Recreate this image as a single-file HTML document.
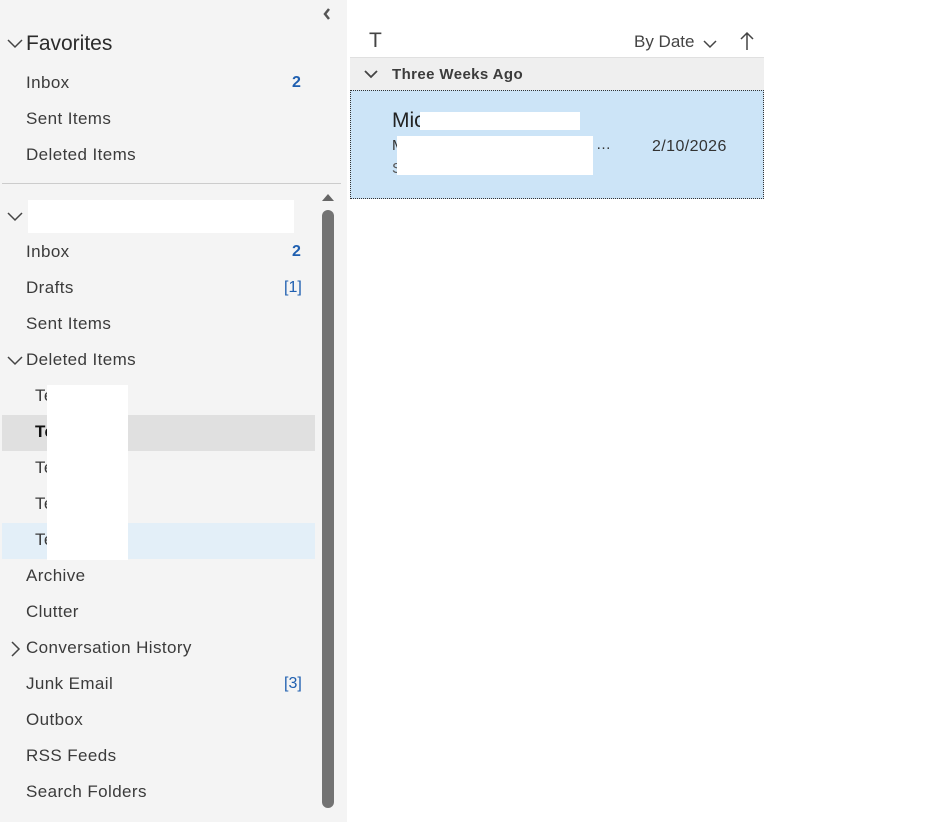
<!DOCTYPE html><html><head><style>
body{margin:0;width:940px;height:822px;background:#fff;font-family:"Liberation Sans",sans-serif;position:relative;overflow:hidden;color:#333}
.a{position:absolute;white-space:nowrap}
.side{position:absolute;left:0;top:0;width:347px;height:822px;background:#f4f4f4}
.it{position:absolute;left:26px;font-size:17px;color:#3b3b3b;letter-spacing:0.4px}
.n{position:absolute;font-size:16px;color:#1f5fb0}
.w{position:absolute;background:#fff}
</style></head><body>
<div class="side">
<svg class="a" style="left:322px;top:7px" width="10" height="14"><path d="M7 2 L3 7 L7 12" stroke="#555" stroke-width="2.5" fill="none"/></svg>
<svg class="a" style="left:7px;top:38px" width="16" height="12"><path d="M1 2 L8 9 L15 2" stroke="#444" stroke-width="1.5" fill="none"/></svg>
<div class="a" style="left:26px;top:32px;font-size:21px;color:#2b2b2b">Favorites</div>
<div class="it" style="top:73px">Inbox</div><div class="n" style="left:292px;top:74px;font-weight:bold">2</div>
<div class="it" style="top:109px">Sent Items</div>
<div class="it" style="top:145px">Deleted Items</div>
<div class="a" style="left:2px;top:183px;width:339px;height:1px;background:#ccc"></div>
<svg class="a" style="left:7px;top:211px" width="16" height="12"><path d="M1 2 L8 9 L15 2" stroke="#444" stroke-width="1.5" fill="none"/></svg>
<div class="w" style="left:28px;top:200px;width:266px;height:33px"></div>
<svg class="a" style="left:321px;top:192px" width="14" height="10"><path d="M1 9 L7 2 L13 9Z" fill="#666"/></svg>
<div class="a" style="left:322px;top:210px;width:12px;height:598px;background:#737373;border-radius:6px"></div>
<div class="it" style="top:242px">Inbox</div><div class="n" style="left:292px;top:243px;font-weight:bold">2</div>
<div class="it" style="top:278px">Drafts</div><div class="n" style="left:284px;top:279px">[1]</div>
<div class="it" style="top:314px">Sent Items</div>
<svg class="a" style="left:7px;top:355px" width="16" height="12"><path d="M1 2 L8 9 L15 2" stroke="#444" stroke-width="1.5" fill="none"/></svg>
<div class="it" style="top:350px">Deleted Items</div>
<div class="a" style="left:2px;top:415px;width:313px;height:36px;background:#e0e0e0"></div>
<div class="a" style="left:2px;top:523px;width:313px;height:36px;background:#e3eff8"></div>
<div class="it" style="left:35px;top:386px">Te</div>
<div class="it" style="left:35px;top:422px;font-weight:bold;color:#111">Te</div>
<div class="it" style="left:35px;top:458px">Te</div>
<div class="it" style="left:35px;top:494px">Te</div>
<div class="it" style="left:35px;top:530px">Te</div>
<div class="w" style="left:47px;top:385px;width:81px;height:175px"></div>
<div class="it" style="top:566px">Archive</div>
<div class="it" style="top:602px">Clutter</div>
<svg class="a" style="left:10px;top:641px" width="12" height="16"><path d="M2 1 L9 8 L2 15" stroke="#444" stroke-width="1.5" fill="none"/></svg>
<div class="it" style="top:638px">Conversation History</div>
<div class="it" style="top:674px">Junk Email</div><div class="n" style="left:284px;top:675px">[3]</div>
<div class="it" style="top:710px">Outbox</div>
<div class="it" style="top:746px">RSS Feeds</div>
<div class="it" style="top:782px">Search Folders</div>
</div>
<div class="a" style="left:369px;top:29px;font-size:21px;color:#444">T</div>
<div class="a" style="left:634px;top:32px;font-size:17px;color:#444">By Date</div>
<svg class="a" style="left:703px;top:39px" width="14" height="10"><path d="M1 2 L7 8 L13 2" stroke="#444" stroke-width="1.5" fill="none"/></svg>
<svg class="a" style="left:740px;top:31px" width="14" height="20"><path d="M7 19 V2 M1 8 L7 2 L13 8" stroke="#444" stroke-width="1.5" fill="none"/></svg>
<div class="a" style="left:350px;top:57px;width:414px;height:32px;background:#efefef;border-top:1px solid #e0e0e0"></div>
<svg class="a" style="left:364px;top:70px" width="14" height="9"><path d="M1 1 L7 7 L13 1" stroke="#444" stroke-width="1.8" fill="none"/></svg>
<div class="a" style="left:392px;top:66px;font-size:15px;font-weight:bold;color:#3c3c3c;letter-spacing:0.4px">Three Weeks Ago</div>
<div class="a" style="left:350px;top:90px;width:412px;height:107px;background:#cce4f7;border:1px dotted #333"></div>
<div class="a" style="left:392px;top:109px;font-size:21px;color:#222">Mic</div>
<div class="w" style="left:420px;top:112px;width:160px;height:18px"></div>
<div class="a" style="left:392px;top:137px;font-size:15px;color:#333">M</div>
<div class="a" style="left:596px;top:136px;font-size:15px;color:#333">…</div>
<div class="a" style="left:392px;top:160px;font-size:15px;color:#555">S</div>
<div class="w" style="left:397px;top:136px;width:196px;height:39px"></div>
<div class="a" style="left:652px;top:138px;font-size:16px;color:#333;letter-spacing:0.4px">2/10/2026</div>
</body></html>
